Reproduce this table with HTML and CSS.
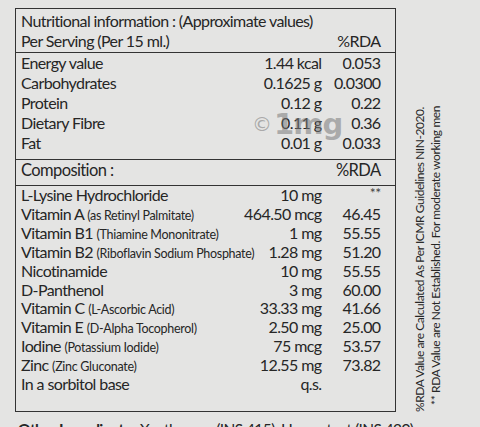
FILE: index.html
```
<!DOCTYPE html>
<html lang="en">
<head>
  <meta charset="UTF-8" />
  <meta name="viewport" content="width=device-width, initial-scale=1" />
  <title>Nutritional information</title>
  <link rel="stylesheet" href="styles.css">
</head>
<body>
  <div class="sheet">
    <div class="label">
      <div class="head">
        <div class="title">Nutritional information : (Approximate values)</div>
        <div class="row">
          <span>Per Serving (Per 15 ml.)</span><span></span><span class="rda">%RDA</span>
        </div>
      </div>

      <div class="nutrients">
        <div class="row"><span>Energy value</span><span class="amt">1.44 kcal</span><span class="rda">0.053</span></div>
        <div class="row"><span>Carbohydrates</span><span class="amt">0.1625 g</span><span class="rda">0.0300</span></div>
        <div class="row"><span>Protein</span><span class="amt">0.12 g</span><span class="rda">0.22</span></div>
        <div class="row"><span>Dietary Fibre</span><span class="amt">0.11 g</span><span class="rda">0.36</span></div>
        <div class="row"><span>Fat</span><span class="amt">0.01 g</span><span class="rda">0.033</span></div>
      </div>

      <div class="comp-head row">
        <span>Composition :</span><span></span><span class="rda">%RDA</span>
      </div>

      <div class="comp">
        <div class="row"><span>L-Lysine Hydrochloride</span><span class="amt">10 mg</span><span class="rda"><span class="stars">**</span></span></div>
        <div class="row"><span>Vitamin A <small>(as Retinyl Palmitate)</small></span><span class="amt">464.50 mcg</span><span class="rda">46.45</span></div>
        <div class="row"><span>Vitamin B1 <small>(Thiamine Mononitrate)</small></span><span class="amt">1 mg</span><span class="rda">55.55</span></div>
        <div class="row"><span>Vitamin B2 <small>(Riboflavin Sodium Phosphate)</small></span><span class="amt">1.28 mg</span><span class="rda">51.20</span></div>
        <div class="row"><span>Nicotinamide</span><span class="amt">10 mg</span><span class="rda">55.55</span></div>
        <div class="row"><span>D-Panthenol</span><span class="amt">3 mg</span><span class="rda">60.00</span></div>
        <div class="row"><span>Vitamin C <small>(L-Ascorbic Acid)</small></span><span class="amt">33.33 mg</span><span class="rda">41.66</span></div>
        <div class="row"><span>Vitamin E <small>(D-Alpha Tocopherol)</small></span><span class="amt">2.50 mg</span><span class="rda">25.00</span></div>
        <div class="row"><span>Iodine <small>(Potassium Iodide)</small></span><span class="amt">75 mcg</span><span class="rda">53.57</span></div>
        <div class="row"><span>Zinc <small>(Zinc Gluconate)</small></span><span class="amt">12.55 mg</span><span class="rda">73.82</span></div>
        <div class="row"><span>In a sorbitol base</span><span class="amt">q.s.</span><span class="rda"></span></div>
      </div>

      <div class="watermark"><span class="copy">©</span>1mg</div>
    </div>

    <div class="notes">
      <div class="note">%RDA Value are Calculated As Per ICMR Guidelines NIN-2020.</div>
      <div class="note second">** RDA Value are Not Established. For moderate working men</div>
    </div>

    <div class="other"><b>Other Ingredients :</b> Xanthogum (INS 415), Humectant (INS 420)</div>
  </div>
</body>
</html>
```

FILE: styles.css
```
body {
  margin: 0;
  height: 427px;
  overflow: hidden;
  background-color: #e4e4e3;
  color: #262626;
  font-family: Lato, "Open Sans", sans-serif;
  font-size: 16px;
  letter-spacing: -0.6px;
}

.sheet {
  display: grid;
  grid-template-columns: 381px auto;
  column-gap: 17px;
  padding: 8px 0 0 15px;
}

.label {
  position: relative;
  border: 1.5px solid #333;
  padding-bottom: 10px;
}

.head {
  padding: 1.5px 0 1px;
  border-bottom: 1.5px solid #333;
  line-height: 20px;
}

.title {
  padding-left: 5px;
}

.row {
  display: grid;
  grid-template-columns: 1fr auto 59px;
  padding: 0 14.5px 0 5px;
  white-space: nowrap;
}

.amt,
.rda {
  text-align: right;
}

.nutrients {
  padding-bottom: 6px;
  border-bottom: 1.5px solid #333;
  line-height: 20px;
}

.comp-head {
  padding-top: 0.5px;
  padding-bottom: 5px;
  border-bottom: 1.5px solid #333;
  line-height: 20px;
  font-size: 16.5px;
}

.comp {
  line-height: 18.9px;
}

.comp small {
  font-size: 12.5px;
  line-height: 1;
  letter-spacing: -0.3px;
}

.stars {
  font-size: 14px;
  line-height: 1;
  color: #444;
  vertical-align: 3px;
}

.watermark {
  position: absolute;
  left: 236px;
  top: 98px;
  font-family: "DejaVu Sans", sans-serif;
  font-weight: bold;
  font-size: 29px;
  letter-spacing: -1px;
  color: rgba(120, 120, 120, 0.55);
}

.watermark .copy {
  font-weight: normal;
  font-size: 20px;
  margin-right: 3px;
  vertical-align: 3px;
}

.notes {
  display: flex;
  gap: 3px;
  height: 404px;
}

.note {
  writing-mode: vertical-rl;
  transform: rotate(180deg);
  font-size: 12px;
  letter-spacing: -0.45px;
  line-height: 13px;
  white-space: nowrap;
}

.note.second {
  padding-top: 7px;
  letter-spacing: -0.4px;
}

.other {
  grid-column: 1 / span 2;
  padding: 8px 0 0 3px;
  font-size: 15.5px;
}
```
